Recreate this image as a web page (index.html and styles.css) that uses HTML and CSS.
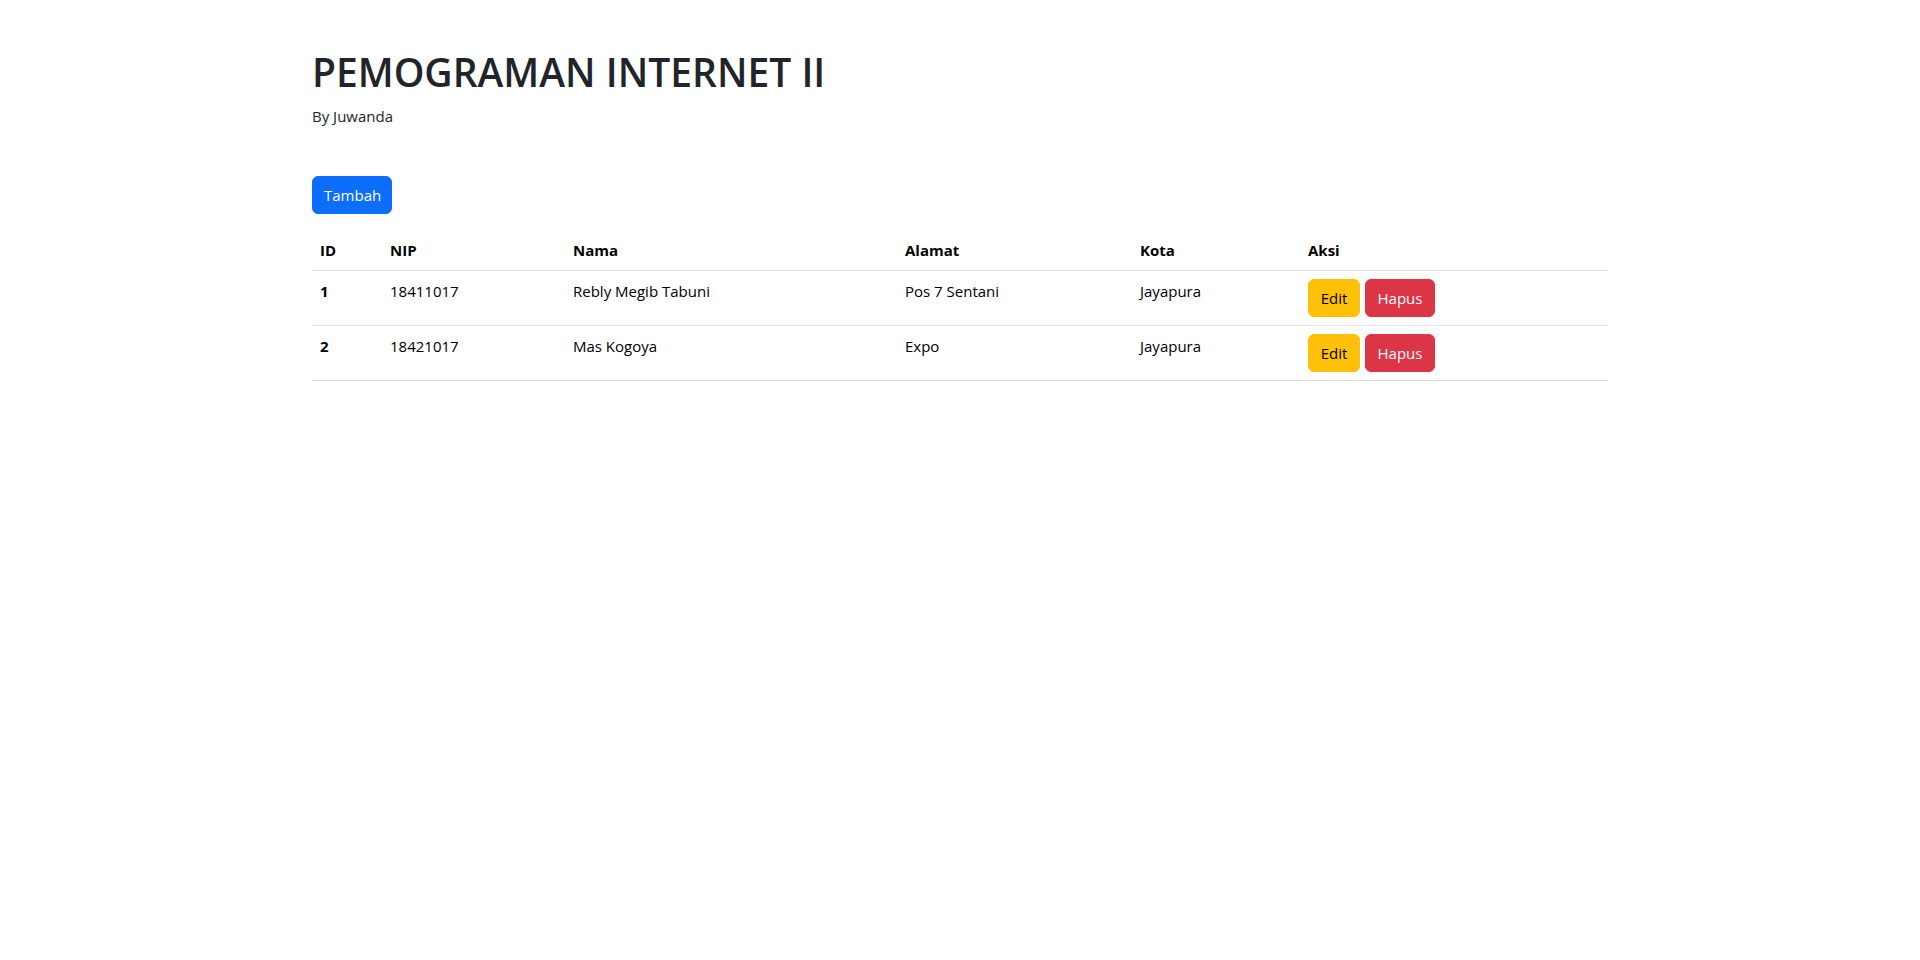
FILE: index.html
```html
<!DOCTYPE html>
<html lang="id">
<head>
<meta charset="utf-8">
<title>Pemograman Internet II</title>
<link rel="stylesheet" href="styles.css">
</head>
<body>
<div class="container">
  <h1 class="title">PEMOGRAMAN INTERNET II</h1>
  <p class="subtitle">By Juwanda</p>
  <div class="actions">
    <a class="btn btn-primary" href="#">Tambah</a>
  </div>
  <table class="table">
    <colgroup>
      <col class="c-id"><col class="c-nip"><col class="c-nama"><col class="c-alamat"><col class="c-kota"><col class="c-aksi">
    </colgroup>
    <thead>
      <tr><th>ID</th><th>NIP</th><th>Nama</th><th>Alamat</th><th>Kota</th><th>Aksi</th></tr>
    </thead>
    <tbody>
      <tr>
        <th>1</th><td>18411017</td><td>Rebly Megib Tabuni</td><td>Pos 7 Sentani</td><td>Jayapura</td>
        <td><div class="aksi"><a class="btn btn-warning" href="#">Edit</a><a class="btn btn-danger" href="#">Hapus</a></div></td>
      </tr>
      <tr>
        <th>2</th><td>18421017</td><td>Mas Kogoya</td><td>Expo</td><td>Jayapura</td>
        <td><div class="aksi"><a class="btn btn-warning" href="#">Edit</a><a class="btn btn-danger" href="#">Hapus</a></div></td>
      </tr>
    </tbody>
  </table>
</div>
</body>
</html>
```
FILE: styles.css
```css
* { box-sizing: border-box; }
html, body { margin: 0; padding: 0; background: #fff; }
body {
  font-family: "Open Sans", "Noto Sans", "Liberation Sans", sans-serif;
  font-size: 15px;
  line-height: 24px;
  color: #212529;
}
.container {
  width: 1320px;
  margin: 0 auto;
  padding: 48px 12px 0;
}
.title {
  margin: 0 0 8px;
  font-size: 39px;
  line-height: 48px;
  font-weight: 600;
  color: #212529;
}
.subtitle {
  margin: 0 0 48px;
  font-size: 15px;
  line-height: 24px;
}
.actions { margin-bottom: 16px; display: flex; }
.btn {
  display: inline-block;
  padding: 6px 11px;
  font-size: 15px;
  line-height: 24px;
  border: 1px solid transparent;
  border-radius: 6px;
  text-decoration: none;
  text-align: center;
}
.btn-primary { background: #0d6efd; border-color: #0d6efd; color: #fff; }
.btn-warning { background: #ffc107; border-color: #ffc107; color: #000; }
.btn-danger { background: #dc3545; border-color: #dc3545; color: #fff; }
.aksi { display: flex; gap: 5px; }
.aksi .btn-warning { width: 52px; }
.aksi .btn-danger { width: 70px; }
.actions .btn { width: 80px; }
.table {
  width: 100%;
  border-collapse: collapse;
  table-layout: fixed;
  color: #000;
  margin-bottom: 16px;
}
.table th, .table td {
  padding: 8px;
  text-align: left;
  vertical-align: top;
  border-bottom: 1px solid #dee2e6;
  font-size: 15px;
  line-height: 24px;
}
.table th { font-weight: 700; }
.c-id { width: 70px; }
.c-nip { width: 183px; }
.c-nama { width: 332px; }
.c-alamat { width: 235px; }
.c-kota { width: 168px; }
.c-aksi { width: auto; }
```
